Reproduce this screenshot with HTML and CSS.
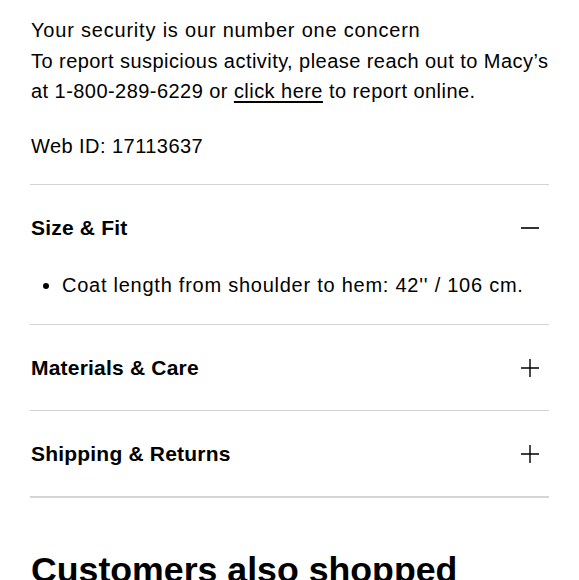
FILE: index.html
```html
<!DOCTYPE html>
<html>
<head>
<meta charset="utf-8">
<link rel="stylesheet" href="styles.css">
</head>
<body>
<div class="page">
  <p class="security">
    <span class="security-title">Your security is our number one concern</span><br>
    To report suspicious activity, please reach out to Macy’s at 1-800-289-6229 or <a href="#" class="link">click here</a> to report online.
  </p>
  <p class="webid">Web ID: 17113637</p>

  <div class="accordion">
    <div class="acc-item">
      <div class="acc-head">
        <span class="acc-title">Size &amp; Fit</span>
        <svg class="acc-icon" width="20" height="20" viewBox="0 0 20 20"><path d="M1 10H19" stroke="#000" stroke-width="1.6" fill="none"/></svg>
      </div>
      <ul class="acc-body">
        <li>Coat length from shoulder to hem: 42'' / 106 cm.</li>
      </ul>
    </div>
    <div class="acc-item">
      <div class="acc-head">
        <span class="acc-title">Materials &amp; Care</span>
        <svg class="acc-icon" width="20" height="20" viewBox="0 0 20 20"><path d="M1 10H19M10 1V19" stroke="#000" stroke-width="1.4" fill="none"/></svg>
      </div>
    </div>
    <div class="acc-item last">
      <div class="acc-head">
        <span class="acc-title">Shipping &amp; Returns</span>
        <svg class="acc-icon" width="20" height="20" viewBox="0 0 20 20"><path d="M1 10H19M10 1V19" stroke="#000" stroke-width="1.4" fill="none"/></svg>
      </div>
    </div>
  </div>

  <h2 class="section-title">Customers also shopped</h2>
</div>
</body>
</html>
```

FILE: styles.css
```css
html, body {
  margin: 0;
  padding: 0;
  background: #fff;
}
body {
  font-family: "Liberation Sans", Arial, sans-serif;
  color: #000;
}
.page {
  padding: 15px 30px 0 31px;
}
.security {
  margin: 0;
  font-size: 20px;
  line-height: 30.5px;
  letter-spacing: 0.45px;
}
.security-title {
  font-weight: 500;
  letter-spacing: 0.8px;
}
.link {
  color: #000;
  text-decoration: underline;
  text-underline-offset: 3px;
}
.webid {
  margin: 24px 0 0;
  font-size: 20px;
  line-height: 30px;
  letter-spacing: 0.45px;
}
.accordion {
  margin-top: 23px;
  margin-left: -1px;
}
.acc-item {
  border-top: 1px solid #d4d4d4;
}
.acc-item.last {
  border-bottom: 2px solid #d4d4d4;
}
.acc-head {
  height: 85px;
  display: flex;
  align-items: center;
  justify-content: space-between;
  padding: 1px 0 0 1px;
  box-sizing: border-box;
}
.acc-title {
  font-size: 21px;
  font-weight: 700;
  letter-spacing: 0.2px;
}
.acc-icon {
  margin-right: 9px;
}
.acc-body {
  margin: 0;
  padding: 0 0 24px 32px;
  font-size: 20px;
  line-height: 30px;
  letter-spacing: 0.75px;
}
.section-title {
  margin: 50px 0 0;
  font-size: 35.7px;
  font-weight: 700;
  line-height: 44px;
}
```
